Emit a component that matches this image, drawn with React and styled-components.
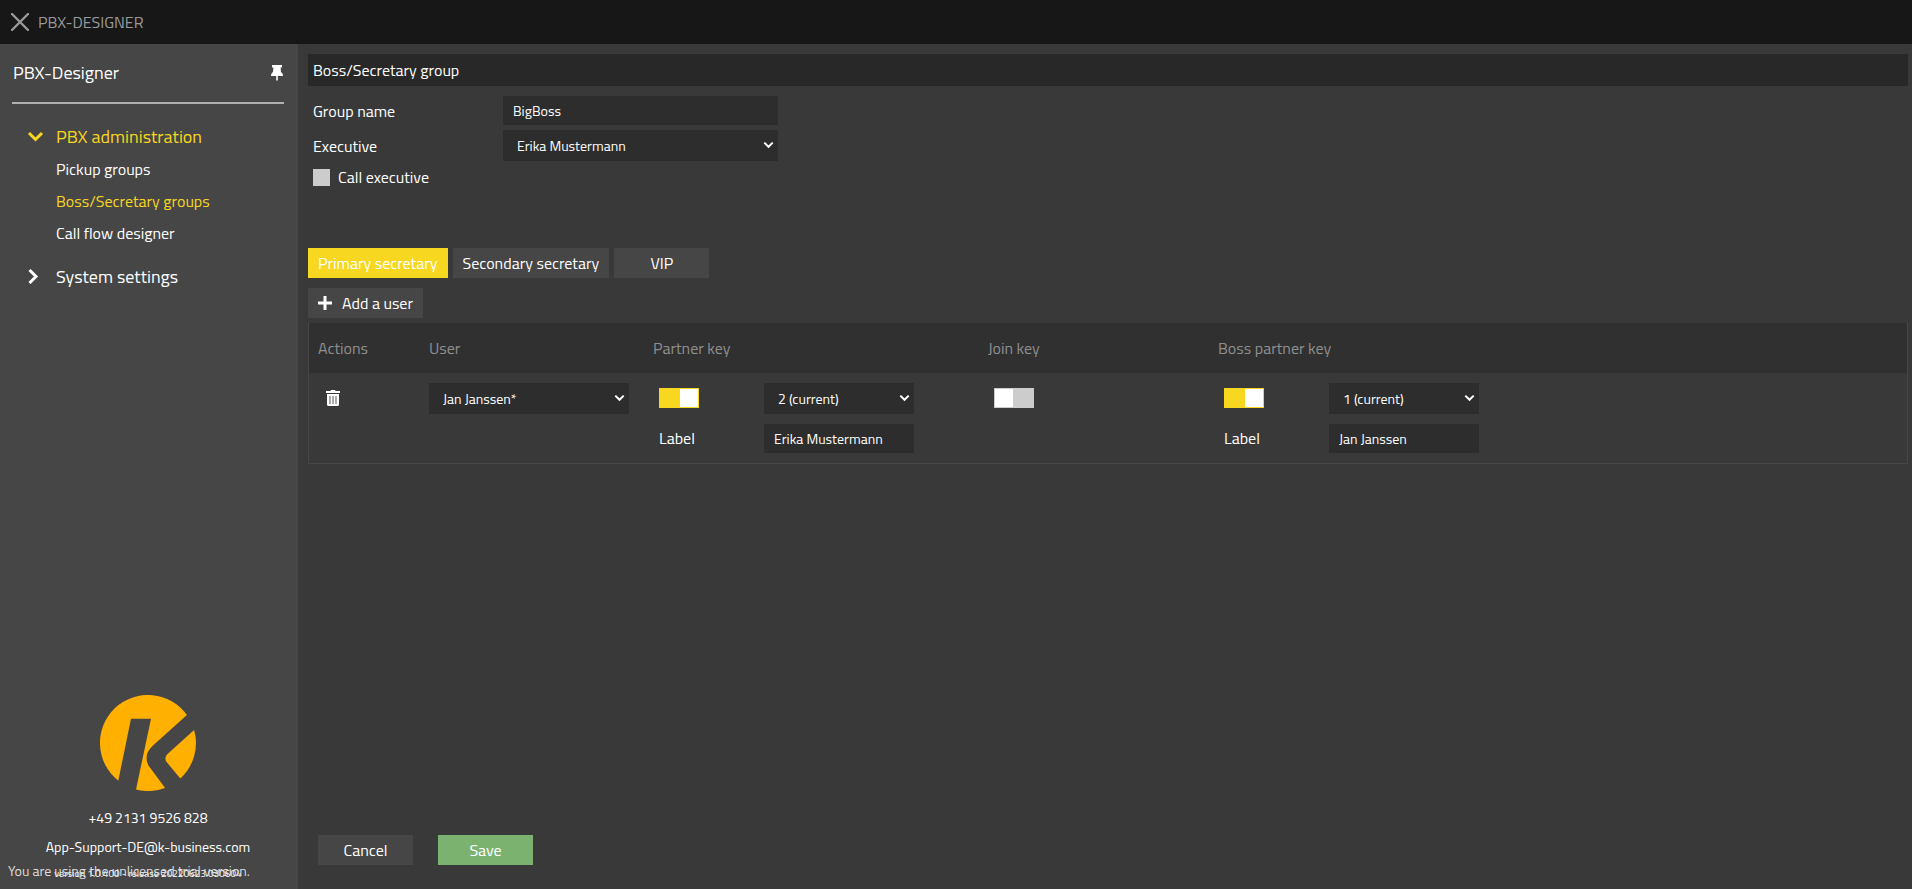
import React, { useState } from "react";
import styled, { createGlobalStyle, css } from "styled-components";

const menu = [
  { value: "Pickup groups" },
  { value: "Boss/Secretary groups", active: true },
  { value: "Call flow designer" },
];

const tabs = ["Primary secretary", "Secondary secretary", "VIP"];

const Chevron = ({ size = 17, color = "#fff", right }) => (
  <svg width={size} height={size} viewBox="0 0 17 17" aria-hidden="true">
    <path
      d={right ? "M2.5 1 L9 7.5 L2.5 14" : "M2 4 L8.5 10.5 L15 4"}
      fill="none"
      stroke={color}
      strokeWidth="3"
    />
  </svg>
);

const PinIcon = () => (
  <svg width="12" height="16" viewBox="0 0 12 16" aria-hidden="true">
    <path
      fill="#fff"
      d="M1 0h10v2.4H9.6L10 7c1.2.7 2 2 2 4H6.8v4.6h-1.6V11H0c0-2 .8-3.3 2-4l.4-4.600H1z"
    />
  </svg>
);

const TrashIcon = () => (
  <svg width="14" height="16" viewBox="0 0 14 16" aria-hidden="true">
    <path fill="#fff" d="M0 1h4.500l.5-1h4l.5 1H14v2H0zM1 4h12v10.500a1.500 1.500 0 0 1-1.500 1.500h-9A1.500 1.500 0 0 1 1 14.500z" />
    <path stroke="#888" strokeWidth="1.400" d="M4 6v8M7 6v8M10 6v8" />
  </svg>
);

const Logo = () => (
  <svg width="96" height="96" viewBox="0 0 96 96" role="img" aria-label="K">
    <path
      fill="#ffb000"
      d="M18.300 85.700A48 48 0 1 1 86.900 19.900L53 50.500Q43 59.500 48.500 70.500L65.100 92.900A48 48 0 0 1 36 94.500L51 23.800H31Z"
    />
    <path fill="#ffb000" d="M94.100 34.900A48 48 0 0 1 80.300 83.500L67 67.500Q63.500 63 67.500 59Z" />
  </svg>
);

const Switch = ({ label, on }) => {
  const [checked, setChecked] = useState(on);
  return (
    <Toggle
      type="checkbox"
      role="switch"
      aria-label={label}
      checked={checked}
      onChange={() => setChecked(!checked)}
    />
  );
};

const Dropdown = ({ id, label, value }) => (
  <SelectBox>
    <Select id={id} aria-label={label} defaultValue={value}>
      <option>{value}</option>
    </Select>
    <Chevron size={11} />
  </SelectBox>
);

const KeySettings = ({ id, title, value, label, on }) => (
  <KeyGrid>
    <Switch label={title} on={on} />
    <Dropdown label={`${title} number`} value={value} />
    <KeyLabel htmlFor={id}>Label</KeyLabel>
    <Input id={id} defaultValue={label} />
  </KeyGrid>
);

const App = () => {
  const [tab, setTab] = useState(tabs[0]);

  return (
    <Layout>
      <GlobalStyle />
      <TopBar>
        <CloseButton aria-label="Close">
          <svg width="18" height="18" viewBox="0 0 18 18">
            <path d="M1 1L17 17M17 1L1 17" stroke="#999" strokeWidth="2.400" strokeLinecap="round" />
          </svg>
        </CloseButton>
        PBX-DESIGNER
      </TopBar>
      <Body>
        <Sidebar>
          <SideHeader>
            <SideTitle>PBX-Designer</SideTitle>
            <PinButton aria-label="Pin menu">
              <PinIcon />
            </PinButton>
          </SideHeader>
          <Nav>
            <NavGroup href="#" $active>
              <Chevron color="#f7d720" />
              PBX administration
            </NavGroup>
            <NavList>
              {menu.map((item) => (
                <NavLink key={item.value} href="#" $active={item.active}>
                  {item.value}
                </NavLink>
              ))}
            </NavList>
            <NavGroup href="#">
              <Chevron right />
              System settings
            </NavGroup>
          </Nav>
          <Support>
            <Logo />
            <Contact href="tel:+4921319526828">+49 2131 9526 828</Contact>
            <Contact href="mailto:App-Support-DE@k-business.com">App-Support-DE@k-business.com</Contact>
            <Version>version 1.0.400 - release 20220623.030604</Version>
          </Support>
          <Trial>You are using the unlicensed trial version.</Trial>
        </Sidebar>
        <Main>
          <Title>Boss/Secretary group</Title>
          <Form>
            <label htmlFor="group">Group name</label>
            <Input id="group" defaultValue="BigBoss" />
            <label htmlFor="executive">Executive</label>
            <Dropdown id="executive" value="Erika Mustermann" />
          </Form>
          <CheckRow>
            <Checkbox type="checkbox" />
            Call executive
          </CheckRow>
          <Tabs role="tablist">
            {tabs.map((item) => (
              <Button
                key={item}
                role="tab"
                aria-selected={tab === item}
                $color={tab === item ? "#f7d720" : undefined}
                onClick={() => setTab(item)}
              >
                {item}
              </Button>
            ))}
          </Tabs>
          <AddButton>
            <svg width="14" height="14" viewBox="0 0 14 14" aria-hidden="true">
              <path d="M7 0v14M0 7h14" stroke="#fff" strokeWidth="3" />
            </svg>
            Add a user
          </AddButton>
          <Table>
            <colgroup>
              <Col $width={111} />
              <Col $width={224} />
              <Col $width={335} />
              <Col $width={230} />
              <col />
            </colgroup>
            <thead>
              <tr>
                <Th>Actions</Th>
                <Th>User</Th>
                <Th>Partner key</Th>
                <Th>Join key</Th>
                <Th>Boss partner key</Th>
              </tr>
            </thead>
            <tbody>
              <tr>
                <Td>
                  <DeleteButton aria-label="Delete user">
                    <TrashIcon />
                  </DeleteButton>
                </Td>
                <Td>
                  <UserCell>
                    <Dropdown label="User" value="Jan Janssen*" />
                  </UserCell>
                </Td>
                <Td>
                  <KeySettings id="partner" title="Partner key" value="2 (current)" label="Erika Mustermann" on />
                </Td>
                <Td>
                  <KeyGrid>
                    <Switch label="Join key" on={false} />
                  </KeyGrid>
                </Td>
                <Td>
                  <KeySettings id="boss" title="Boss partner key" value="1 (current)" label="Jan Janssen" on />
                </Td>
              </tr>
            </tbody>
          </Table>
          <Footer>
            <Button>Cancel</Button>
            <Button $color="#7cb270">Save</Button>
          </Footer>
        </Main>
      </Body>
    </Layout>
  );
};

const GlobalStyle = createGlobalStyle`
  * {
    box-sizing: border-box;
  }
  body {
    margin: 0;
    background: #393939;
    color: #fff;
    font-family: "Titillium Web", Roboto, sans-serif;
    font-size: 16px;
    line-height: 24px;
  }
  button, input, select {
    font-family: inherit;
    color: inherit;
    border: none;
    border-radius: 0;
    margin: 0;
  }
  button {
    cursor: pointer;
  }
  svg {
    display: block;
    flex: none;
  }
`;

const Layout = styled.div`
  min-height: 100vh;
  display: flex;
  flex-direction: column;
`;

const TopBar = styled.header`
  height: 44px;
  padding-left: 11px;
  display: flex;
  align-items: center;
  gap: 9px;
  background: #171717;
  color: #999;
`;

const CloseButton = styled.button`
  padding: 0;
  background: none;
`;

const Body = styled.div`
  flex: 1;
  display: flex;
`;

const Sidebar = styled.aside`
  position: relative;
  width: 298px;
  flex: none;
  display: flex;
  flex-direction: column;
  background: #464646;
`;

const SideHeader = styled.div`
  height: 60px;
  margin: 0 14px 0 12px;
  padding: 0 1px;
  display: flex;
  align-items: center;
  justify-content: space-between;
  border-bottom: 2px solid #b0b0b0;
`;

const SideTitle = styled.h1`
  margin: 0;
  font-size: 18px;
  font-weight: 400;
`;

const PinButton = styled.button`
  padding: 0;
  background: none;
`;

const Nav = styled.nav`
  padding: 20px 14px 0 27px;
`;

const NavGroup = styled.a`
  display: flex;
  align-items: center;
  gap: 12px;
  padding: 1px 0;
  color: ${({ $active }) => ($active ? "#f7d720" : "#fff")};
  font-size: 18px;
  text-decoration: none;
`;

const NavList = styled.div`
  display: flex;
  flex-direction: column;
  gap: 8px;
  padding: 7px 0 19px 29px;
`;

const NavLink = styled.a`
  color: ${({ $active }) => ($active ? "#f7d720" : "#fff")};
  text-decoration: none;
`;

const Support = styled.div`
  margin-top: auto;
  display: flex;
  flex-direction: column;
  align-items: center;
  padding: 0 2px 7px 0;
`;

const Contact = styled.a`
  margin-top: 15px;
  color: #fff;
  font-size: 14px;
  line-height: 14px;
  text-decoration: none;

  ${Support} svg + & {
    margin-top: 20px;
  }
`;

const Version = styled.div`
  margin-top: 12px;
  font-size: 10px;
  line-height: 16px;
`;

/* lies over the version line */
const Trial = styled.div`
  position: absolute;
  left: 8px;
  bottom: 6px;
  color: #ddd;
  font-size: 14px;
`;

const Main = styled.main`
  flex: 1;
  min-width: 0;
  display: flex;
  flex-direction: column;
  padding: 10px 4px 24px 10px;
`;

const Title = styled.h2`
  margin: 0;
  padding: 4px 5px;
  background: #282828;
  font-size: 16px;
  font-weight: 400;
`;

const Form = styled.div`
  display: grid;
  grid-template-columns: 185px 275px;
  gap: 5px;
  align-items: center;
  padding: 10px 5px 0;
`;

const field = css`
  width: 100%;
  background: #2d2d2d;
  font-size: 14px;
`;

const Input = styled.input`
  ${field}
  height: 29px;
  padding: 0 10px;
`;

const SelectBox = styled.div`
  display: grid;
  align-items: center;

  > * {
    grid-area: 1 / 1;
  }

  svg {
    justify-self: end;
    margin-right: 4px;
    pointer-events: none;
  }
`;

const Select = styled.select`
  ${field}
  appearance: none;
  height: 31px;
  padding: 0 24px 0 14px;
`;

const CheckRow = styled.label`
  display: flex;
  align-items: center;
  gap: 8px;
  align-self: flex-start;
  margin: 4px 0 0 5px;
`;

const Checkbox = styled.input`
  appearance: none;
  width: 17px;
  height: 17px;
  background: #ccc;

  &:checked {
    background: #f7d720;
  }
`;

const Tabs = styled.div`
  display: flex;
  gap: 5px;
  margin: 59px 0 10px;
`;

const Button = styled.button`
  min-width: 95px;
  height: 30px;
  padding: 0 10px;
  background: ${({ $color }) => $color || "#464646"};
  font-size: 16px;
`;

const AddButton = styled(Button)`
  display: flex;
  align-items: center;
  gap: 10px;
  align-self: flex-start;
`;

const Table = styled.table`
  width: 100%;
  margin-top: 5px;
  table-layout: fixed;
  border-collapse: separate;
  border-spacing: 0;
  border: 1px solid #464646;
  border-top: none;
`;

const Col = styled.col`
  width: ${({ $width }) => $width}px;
`;

const Th = styled.th`
  height: 50px;
  padding: 0 9px;
  background: #303030;
  color: #8f8f8f;
  font-weight: 400;
  text-align: left;
`;

const Td = styled.td`
  height: 90px;
  padding: 10px 9px;
  vertical-align: top;
`;

const DeleteButton = styled.button`
  padding: 7px 8px;
  background: none;
`;

const UserCell = styled.div`
  width: 200px;
`;

const KeyGrid = styled.div`
  display: grid;
  grid-template-columns: 105px 150px;
  grid-template-rows: 31px;
  row-gap: 10px;
  align-items: center;
  padding-left: 6px;
`;

const KeyLabel = styled.label`
  padding-bottom: 1px;
`;

const Toggle = styled.input`
  appearance: none;
  display: flex;
  width: 40px;
  height: 20px;
  padding: 1px;
  background: #ccc;
  cursor: pointer;

  ${KeyGrid} > & {
    margin-bottom: 1px;
  }

  &::before {
    content: "";
    width: 18px;
    background: #fff;
  }

  &:checked {
    justify-content: flex-end;
    background: #f7d720;
  }
`;

const Footer = styled.footer`
  display: flex;
  gap: 25px;
  margin-top: auto;
  padding-left: 10px;
`;

export default App;
